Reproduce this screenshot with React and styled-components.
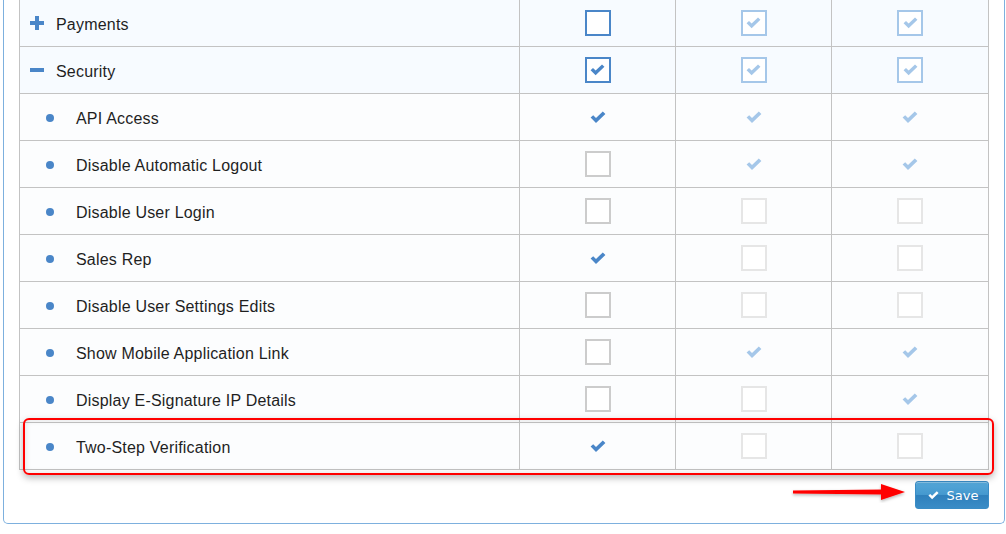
import { createGlobalStyle, styled } from "styled-components";

const BLUE = "#4a86c8";
const LIGHT_BLUE = "#a5c7e9";

const rows = [
  { type: "group", open: false, label: "Payments", cells: ["box", "box-check-dis", "box-check-dis"] },
  { type: "group", open: true, label: "Security", cells: ["box-check", "box-check-dis", "box-check-dis"] },
  { type: "item", label: "API Access", cells: ["check", "check-dis", "check-dis"] },
  { type: "item", label: "Disable Automatic Logout", cells: ["empty", "check-dis", "check-dis"] },
  { type: "item", label: "Disable User Login", cells: ["empty", "empty-dis", "empty-dis"] },
  { type: "item", label: "Sales Rep", cells: ["check", "empty-dis", "empty-dis"] },
  { type: "item", label: "Disable User Settings Edits", cells: ["empty", "empty-dis", "empty-dis"] },
  { type: "item", label: "Show Mobile Application Link", cells: ["empty", "check-dis", "check-dis"] },
  { type: "item", label: "Display E-Signature IP Details", cells: ["empty", "empty-dis", "check-dis"] },
  { type: "item", label: "Two-Step Verification", cells: ["check", "empty-dis", "empty-dis"] },
];

// thick check mark, like the old icon font one
function Check({ color, size = 16 }) {
  return (
    <svg width={size} height={(size * 12) / 16} viewBox="0 0 16 12">
      <path d="M0.6 6.6 L3.2 4.2 L6 7 L12.8 0.4 L15.4 2.9 L6 12 Z" fill={color} />
    </svg>
  );
}

function renderCell(kind) {
  switch (kind) {
    case "box":
      return <StBox $color={BLUE} />;
    case "box-check":
      return (
        <StBox $color={BLUE}>
          <Check color={BLUE} size={15} />
        </StBox>
      );
    case "box-check-dis":
      return (
        <StBox $color={LIGHT_BLUE}>
          <Check color={LIGHT_BLUE} size={15} />
        </StBox>
      );
    case "check":
      return <Check color={BLUE} />;
    case "check-dis":
      return <Check color={LIGHT_BLUE} />;
    case "empty":
      return <StBox $color="#cccccc" />;
    default:
      return <StBox $color="#e6e6e6" />;
  }
}

function GroupIcon({ open }) {
  return (
    <svg width="14" height="14" viewBox="0 0 14 14">
      <rect x="0" y="5" width="14" height="4" fill={BLUE} />
      {!open && <rect x="5" y="0" width="4" height="14" fill={BLUE} />}
    </svg>
  );
}

function App() {
  return (
    <>
      <GlobalStyle />
      <StPage>
        <StPanel>
          <StTable>
            {rows.map((row, index) => (
              <StRow key={index} $group={row.type === "group"}>
                <StLabelCell>
                  {row.type === "group" ? (
                    <>
                      <StIconSlot>
                        <GroupIcon open={row.open} />
                      </StIconSlot>
                      <StLabel>{row.label}</StLabel>
                    </>
                  ) : (
                    <>
                      <StBullet />
                      <StLabel>{row.label}</StLabel>
                    </>
                  )}
                </StLabelCell>
                {row.cells.map((cell, i) => (
                  <StCell key={i}>{renderCell(cell)}</StCell>
                ))}
              </StRow>
            ))}
          </StTable>
          <StFooter>
            <StSaveButton type="button">
              <Check color="#ffffff" size={11} />
              Save
            </StSaveButton>
          </StFooter>
          <StHighlight />
          <StArrow width="118" height="22" viewBox="0 0 118 22">
            <defs>
              <filter id="sh" x="-10%" y="-50%" width="120%" height="200%">
                <feDropShadow dx="0" dy="1.5" stdDeviation="1.5" floodColor="#000" floodOpacity="0.3" />
              </filter>
            </defs>
            <g filter="url(#sh)">
              <polygon points="2,9.5 92,8.5 92,13.5 2,12.5" fill="#ff0000" />
              <polygon points="90,3 114,11 90,19" fill="#ff0000" />
            </g>
          </StArrow>
        </StPanel>
      </StPage>
    </>
  );
}

export default App;

const GlobalStyle = createGlobalStyle`
  html, body {
    margin: 0;
    padding: 0;
    background: #ffffff;
    overflow: hidden;
  }
  body {
    font-family: "Liberation Sans", Arial, sans-serif;
    color: #222222;
  }
`;

const StPage = styled.div`
  width: 1006px;
  height: 534px;
  padding: 0 1px 0 3px;
  box-sizing: border-box;
`;

const StPanel = styled.div`
  position: relative;
  border: 1px solid #7db0de;
  border-top: none;
  border-radius: 0 0 5px 5px;
  padding: 0 15px 14px 15px;
  background: #ffffff;
`;

const StTable = styled.div`
  margin-top: -1px;
  width: 970px;
  border-top: 1px solid #c3c3c3;
  border-left: 1px solid #c3c3c3;
  box-sizing: border-box;
`;

const StRow = styled.div`
  display: grid;
  grid-template-columns: 500px 156px 156px 157px;
  height: 47px;
  box-sizing: border-box;
  border-bottom: 1px solid #c3c3c3;
  background: ${({ $group }) => ($group ? "#f7fbff" : "#fcfdfe")};
`;

const StLabelCell = styled.div`
  display: flex;
  align-items: center;
  border-right: 1px solid #c3c3c3;
  padding-left: 9px;
`;

const StCell = styled.div`
  display: flex;
  align-items: center;
  justify-content: center;
  border-right: 1px solid #c3c3c3;
`;

const StIconSlot = styled.span`
  display: flex;
  width: 26px;
  height: 14px;
  padding-left: 1px;
`;

const StLabel = styled.span`
  padding-top: 3px;
  font-size: 16px;
  letter-spacing: 0.2px;
  color: #1f1f1f;
`;

const StBullet = styled.span`
  width: 8px;
  height: 8px;
  margin: 1px 22px 0 17px;
  border-radius: 50%;
  background: ${BLUE};
`;

const StBox = styled.span`
  display: flex;
  align-items: center;
  justify-content: center;
  width: 26px;
  height: 26px;
  box-sizing: border-box;
  border: 2px solid ${({ $color }) => $color};
  background: #ffffff;
`;

const StFooter = styled.div`
  display: flex;
  justify-content: flex-end;
  margin-top: 11px;
`;

const StSaveButton = styled.button`
  display: flex;
  align-items: center;
  justify-content: center;
  gap: 8px;
  width: 74px;
  height: 28px;
  margin: 0;
  padding: 1px 0 0 2px;
  border: 1px solid #3a8cc5;
  border-radius: 3px;
  background: linear-gradient(#55a7d8 0%, #4599cf 48%, #2f80bc 52%, #3a8cc6 100%);
  color: #ffffff;
  font-family: "DejaVu Sans", Verdana, sans-serif;
  font-size: 13px;
  font-weight: normal;
  box-shadow: inset 0 1px 0 rgba(255, 255, 255, 0.3);
  cursor: pointer;
`;

const StHighlight = styled.div`
  position: absolute;
  left: 19px;
  top: 419px;
  width: 971px;
  height: 57px;
  box-sizing: border-box;
  border: 2px solid #ff0000;
  border-radius: 6px;
  box-shadow: 0 3px 7px rgba(0, 0, 0, 0.28), inset 0 0 6px rgba(0, 0, 0, 0.12);
  pointer-events: none;
`;

const StArrow = styled.svg`
  position: absolute;
  left: 787px;
  top: 482px;
`;
